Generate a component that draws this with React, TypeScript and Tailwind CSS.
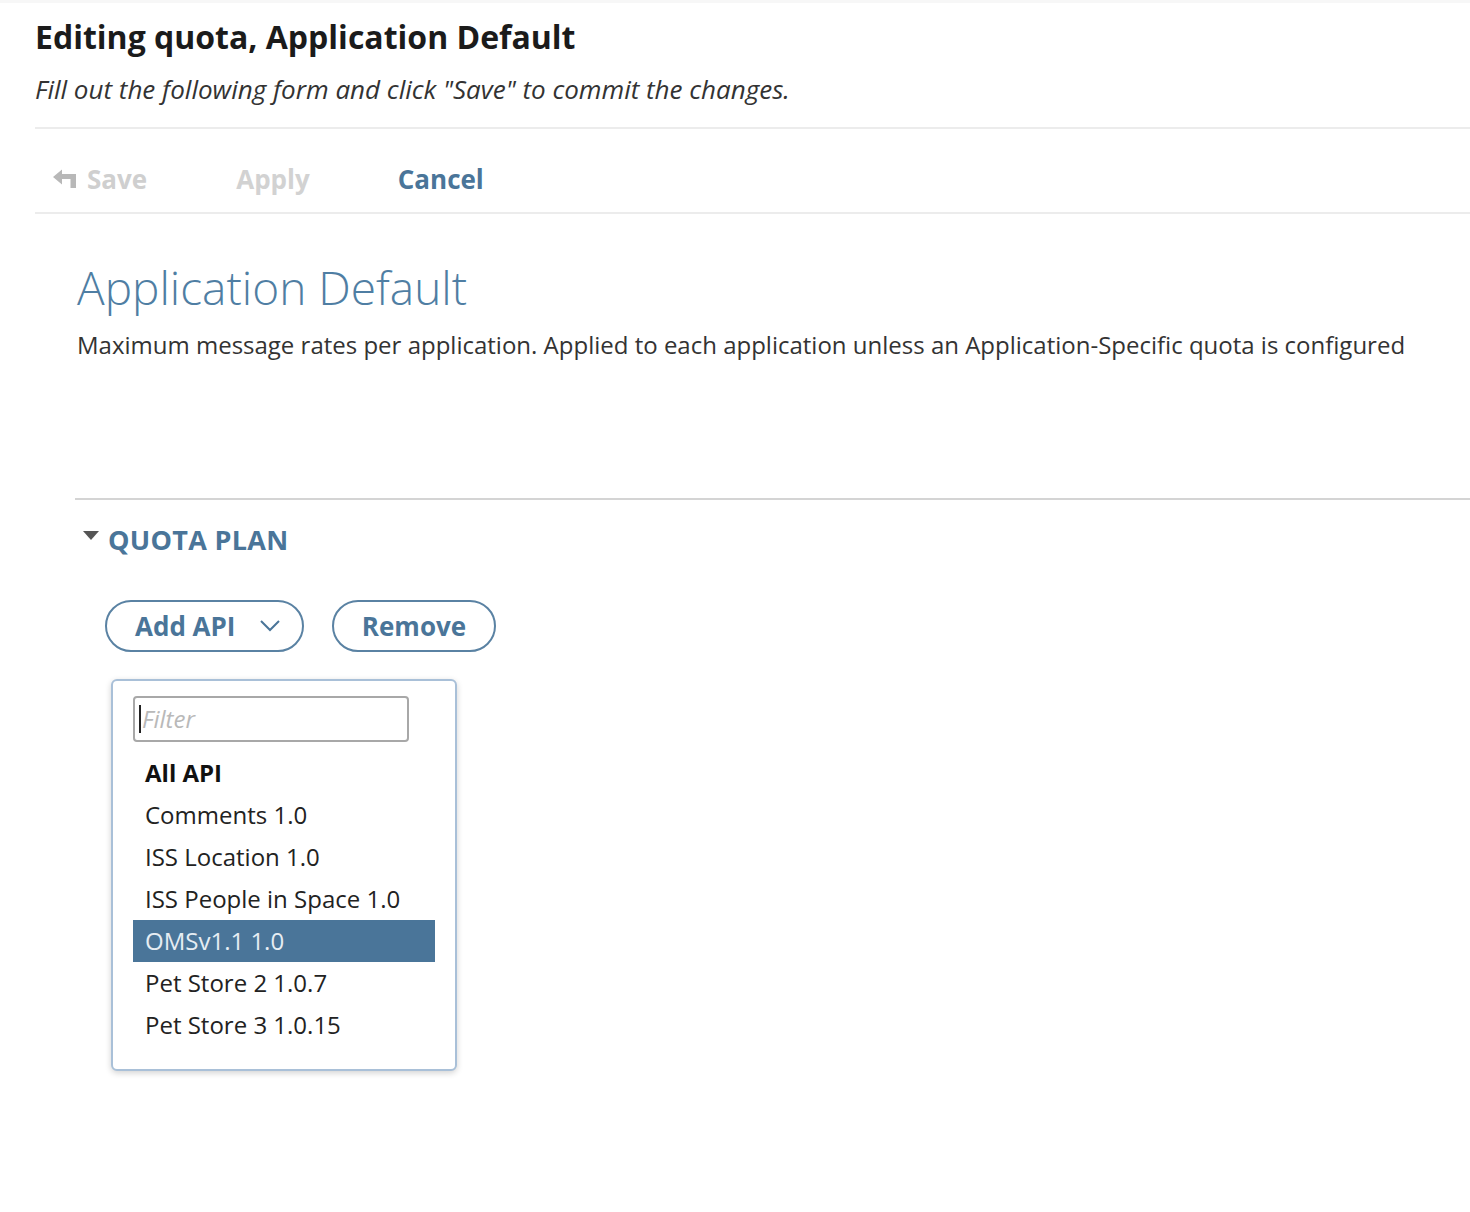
import React from "react";

const items = [
  { label: "All API", bold: true },
  { label: "Comments 1.0" },
  { label: "ISS Location 1.0" },
  { label: "ISS People in Space 1.0" },
  { label: "OMSv1.1 1.0", selected: true },
  { label: "Pet Store 2 1.0.7" },
  { label: "Pet Store 3 1.0.15" },
];

export default function App() {
  return (
    <div
      className="min-h-[1212px] w-full bg-white border-t-[3px] border-[#f7f7f7]"
      style={{ fontFamily: '"Open Sans", "Noto Sans", sans-serif' }}
    >
      <div className="pl-[35px]">
        <h1 className="pt-[14px] text-[32px] leading-[40px] font-bold text-[#1b1b1b]">
          Editing quota, Application Default
        </h1>
        <p className="mt-[15px] text-[26px] leading-[34px] italic text-[#333]">
          Fill out the following form and click "Save" to commit the changes.
        </p>
        <div className="mt-[21px] h-[2px] bg-[#ececec]" />
        <div className="flex items-center pt-[34px] pb-[17px] h-[83px] text-[26px] leading-[32px] font-bold">
          <button className="flex items-center gap-[9px] ml-[17px] text-[#cfcfcf]">
            <svg width="26" height="20" viewBox="0 0 26 20" className="text-[#b8b8b8]">
              <path d="M1 8 L10 0.5 L10 5 L24 5 L24 19 L18.5 19 L18.5 10 L10 10 L10 15.5 Z" fill="currentColor" />
            </svg>
            Save
          </button>
          <button className="ml-[89px] text-[#d2d2d2]">Apply</button>
          <button className="ml-[88px] text-[#4a7599]">Cancel</button>
        </div>
        <div className="h-[2px] bg-[#ececec]" />
      </div>

      <div className="pl-[75px]">
        <h2 className="mt-[45px] pl-[2px] text-[46px] leading-[56px] font-light text-[#4f7ea3]">
          Application Default
        </h2>
        <p className="mt-[14px] pl-[2px] text-[24px] leading-[32px] text-[#333]">
          Maximum message rates per application. Applied to each application unless an Application-Specific quota is configured
        </p>
        <div className="mt-[137px] h-[2px] bg-[#d4d4d4]" />

        <div className="flex items-center mt-[22px] h-[36px]">
          <svg width="16" height="10" viewBox="0 0 16 10" className="ml-[8px] mb-[8px]">
            <path d="M0 0 L16 0 L8 9 Z" fill="#555" />
          </svg>
          <span className="ml-[9px] text-[27px] font-bold text-[#4a7599] tracking-[0.3px]">QUOTA PLAN</span>
        </div>

        <div className="flex items-center mt-[42px] ml-[30px] gap-[28px]">
          <button className="flex items-center h-[52px] w-[199px] pl-[28px] rounded-full border-2 border-[#5a82a3] text-[26px] font-bold text-[#4a7599]">
            Add API
            <svg width="22" height="14" viewBox="0 0 22 14" className="ml-[24px]">
              <path d="M2 2 L11 11 L20 2" fill="none" stroke="#4a7599" strokeWidth="2" />
            </svg>
          </button>
          <button className="flex items-center justify-center h-[52px] w-[164px] rounded-full border-2 border-[#5a82a3] text-[26px] font-bold text-[#4a7599]">
            Remove
          </button>
        </div>

        <div className="mt-[27px] ml-[36px] w-[346px] h-[392px] rounded-[6px] border-2 border-[#a9c0d8] bg-white shadow-[0_2px_6px_rgba(0,0,0,0.18)] pt-[15px] pl-[20px] pr-[20px]">
          <div className="w-[276px] h-[46px] rounded-[4px] border-2 border-[#a8a8a8] flex items-center pl-[4px]">
            <span className="w-[2px] h-[28px] bg-[#222]" />
            <span className="ml-[1px] text-[24px] italic text-[#b9b9b9]">Filter</span>
          </div>
          <ul className="mt-[10px]">
            {items.map((it) => (
              <li
                key={it.label}
                className={
                  "h-[42px] flex items-center pl-[12px] text-[24px] " +
                  (it.selected
                    ? "bg-[#4a7599] text-[#e6edf3]"
                    : it.bold
                    ? "font-bold text-[#111]"
                    : "text-[#222]")
                }
              >
                {it.label}
              </li>
            ))}
          </ul>
        </div>
      </div>
    </div>
  );
}
